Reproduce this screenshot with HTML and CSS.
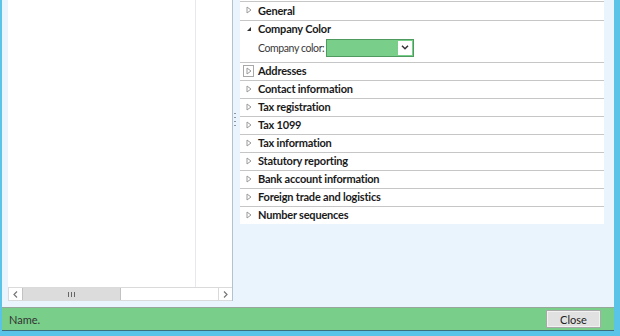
FILE: index.html
```html
<!DOCTYPE html>
<html lang="en">

<head>
    <meta charset="UTF-8">
    <title>Company Color</title>
    <link rel="stylesheet" href="styles.css">
</head>

<body>
    <div class="window">
        <div class="main">
            <!-- Left navigation grid -->
            <div class="nav-pane">
                <div class="nav-grid">
                    <div class="nav-col nav-col-name"></div>
                    <div class="nav-col"></div>
                </div>
                <div class="hscroll">
                    <span class="scroll-btn">
                        <svg width="5" height="7" viewBox="0 0 5 7"><polyline points="4,0.5 1,3.5 4,6.5" fill="none" stroke="#777" stroke-width="1.2"/></svg>
                    </span>
                    <span class="scroll-thumb"><span class="thumb-grip"></span></span>
                    <span class="scroll-track"></span>
                    <span class="scroll-btn">
                        <svg width="5" height="7" viewBox="0 0 5 7"><polyline points="1,0.5 4,3.5 1,6.5" fill="none" stroke="#777" stroke-width="1.2"/></svg>
                    </span>
                </div>
            </div>

            <!-- Splitter -->
            <div class="splitter"><span class="splitter-grip"></span></div>

            <!-- Fast tabs -->
            <div class="detail-pane">
                <div class="fasttabs">
                    <div class="fasttab fasttab-first">
                        <span class="tab-icon"><svg width="6" height="8" viewBox="0 0 6 8"><polygon points="1,1 5,4 1,7" fill="#fff" stroke="#9a9a9a"/></svg></span>
                        General
                    </div>
                    <div class="fasttab-open">
                        <div class="fasttab">
                            <span class="tab-icon"><svg width="6" height="6" viewBox="0 0 6 6"><polygon points="5,1 5,5 1,5" fill="#333"/></svg></span>
                            Company Color
                        </div>
                        <div class="field-row">
                            <label class="field-label">Company color:</label>
                            <div class="combo">
                                <span class="combo-value"></span>
                                <span class="combo-btn">
                                    <svg width="8" height="5" viewBox="0 0 8 5"><polyline points="1,0.8 4,3.8 7,0.8" fill="none" stroke="#333" stroke-width="1.5"/></svg>
                                </span>
                            </div>
                        </div>
                    </div>
                    <div class="fasttab">
                        <span class="tab-icon tab-icon-focus"><svg width="6" height="8" viewBox="0 0 6 8"><polygon points="1,1 5,4 1,7" fill="#fff" stroke="#9a9a9a"/></svg></span>
                        Addresses
                    </div>
                    <div class="fasttab">
                        <span class="tab-icon"><svg width="6" height="8" viewBox="0 0 6 8"><polygon points="1,1 5,4 1,7" fill="#fff" stroke="#9a9a9a"/></svg></span>
                        Contact information
                    </div>
                    <div class="fasttab">
                        <span class="tab-icon"><svg width="6" height="8" viewBox="0 0 6 8"><polygon points="1,1 5,4 1,7" fill="#fff" stroke="#9a9a9a"/></svg></span>
                        Tax registration
                    </div>
                    <div class="fasttab">
                        <span class="tab-icon"><svg width="6" height="8" viewBox="0 0 6 8"><polygon points="1,1 5,4 1,7" fill="#fff" stroke="#9a9a9a"/></svg></span>
                        Tax 1099
                    </div>
                    <div class="fasttab">
                        <span class="tab-icon"><svg width="6" height="8" viewBox="0 0 6 8"><polygon points="1,1 5,4 1,7" fill="#fff" stroke="#9a9a9a"/></svg></span>
                        Tax information
                    </div>
                    <div class="fasttab">
                        <span class="tab-icon"><svg width="6" height="8" viewBox="0 0 6 8"><polygon points="1,1 5,4 1,7" fill="#fff" stroke="#9a9a9a"/></svg></span>
                        Statutory reporting
                    </div>
                    <div class="fasttab">
                        <span class="tab-icon"><svg width="6" height="8" viewBox="0 0 6 8"><polygon points="1,1 5,4 1,7" fill="#fff" stroke="#9a9a9a"/></svg></span>
                        Bank account information
                    </div>
                    <div class="fasttab">
                        <span class="tab-icon"><svg width="6" height="8" viewBox="0 0 6 8"><polygon points="1,1 5,4 1,7" fill="#fff" stroke="#9a9a9a"/></svg></span>
                        Foreign trade and logistics
                    </div>
                    <div class="fasttab fasttab-last">
                        <span class="tab-icon"><svg width="6" height="8" viewBox="0 0 6 8"><polygon points="1,1 5,4 1,7" fill="#fff" stroke="#9a9a9a"/></svg></span>
                        Number sequences
                    </div>
                </div>
            </div>
        </div>

        <!-- Status bar -->
        <div class="status-bar">
            <span class="status-text">Name.</span>
            <button class="close-button">Close</button>
            <span class="size-grip"></span>
        </div>
    </div>
</body>

</html>
```

FILE: styles.css
```css
body {
    margin: 0;
    font-family: 'Lato', 'Liberation Sans', sans-serif;
    color: #1e1e1e;
}

.window {
    width: 620px;
    height: 336px;
    box-sizing: border-box;
    border-left: 2px solid #5ac4e8;
    border-right: 6px solid #5ac4e8;
    border-bottom: 5px solid #5ac4e8;
    display: flex;
    flex-direction: column;
}

.main {
    height: 307px;
    flex: none;
    background-color: #eaf4fd;
    display: flex;
    padding: 0 10px 6px 6px;
    box-sizing: border-box;
}

/* Navigation grid */
.nav-pane {
    width: 225px;
    display: flex;
    flex-direction: column;
    background-color: #fff;
    border-right: 1px solid #b3c1d2;
    box-sizing: border-box;
}

.nav-grid {
    flex: 1;
    display: flex;
}

.nav-col {
    flex: 1;
}

.nav-col-name {
    flex: none;
    width: 187px;
    border-right: 1px solid #e4e9ef;
}

.hscroll {
    height: 14px;
    display: flex;
    border: 1px solid #dadada;
    border-right: none;
    box-sizing: border-box;
}

.scroll-btn {
    width: 13px;
    display: flex;
    align-items: center;
    justify-content: center;
}

.scroll-thumb {
    width: 97px;
    background-color: #dcdcdc;
    border: 1px solid #c2c2c2;
    border-top: none;
    border-bottom: none;
    display: flex;
    align-items: center;
    justify-content: center;
}

.thumb-grip {
    width: 7px;
    height: 5px;
    background: repeating-linear-gradient(90deg, #666 0 1px, transparent 1px 3px);
}

.scroll-track {
    flex: 1;
    border-right: 1px solid #dadada;
}

/* Splitter */
.splitter {
    width: 7px;
    display: flex;
    flex-direction: column;
}

.splitter-grip {
    margin: 113px 0 0 1px;
    width: 2px;
    height: 14px;
    background: repeating-linear-gradient(180deg, #8a97a6 0 1px, transparent 1px 4px);
}

/* Fast tabs */
.detail-pane {
    flex: 1;
}

.fasttabs {
    background-color: #fff;
    padding-top: 1px;
}

.fasttab {
    height: 15px;
    padding-bottom: 2px;
    display: flex;
    align-items: center;
    font-size: 11px;
    font-weight: bold;
    letter-spacing: -0.2px;
    color: #1a1a1a;
    border-bottom: 1px solid #c6c6c6;
}

.fasttab-first {
    height: 16px;
    border-top: 1px solid #c6c6c6;
}

.fasttab-last {
    border-bottom: none;
}

.fasttab-open {
    border-bottom: 1px solid #c6c6c6;
    padding-bottom: 5px;
}

.fasttab-open .fasttab {
    border-bottom: none;
}

.tab-icon {
    width: 11px;
    height: 12px;
    margin: 0 4px 0 3px;
    box-sizing: border-box;
    display: flex;
    align-items: center;
    justify-content: center;
}

.tab-icon-focus {
    border: 1px solid #a8a8a8;
}

.field-row {
    height: 19px;
    display: flex;
    align-items: center;
    padding-left: 18px;
}

.field-label {
    flex: none;
    margin-right: 2px;
    white-space: nowrap;
    font-size: 10.5px;
    letter-spacing: -0.4px;
    color: #3a3a3a;
}

.combo {
    width: 88px;
    height: 18px;
    display: flex;
    border: 1px solid #4f9a5e;
    box-sizing: border-box;
    background-color: #79ce89;
}

.combo-value {
    flex: 1;
}

.combo-btn {
    width: 14px;
    margin: 1px;
    background-color: #fff;
    display: flex;
    align-items: center;
    justify-content: center;
}

/* Status bar */
.status-bar {
    flex: 1;
    display: flex;
    align-items: center;
    background-color: #79ce89;
    border-top: 1px solid #97a79c;
    border-bottom: 1px solid #3d6f7c;
    padding-left: 7px;
}

.status-text {
    flex: 1;
    font-size: 11px;
    color: #333;
}

.close-button {
    width: 55px;
    height: 18px;
    padding: 0;
    background-color: #e1e1e1;
    border: 1px solid #a9a9a9;
    box-shadow: inset 0 0 0 1px #f2f2f2;
    font-family: 'Lato', 'Liberation Sans', sans-serif;
    font-size: 11px;
    color: #222;
}

.size-grip {
    width: 13px;
    height: 22px;
}
```
